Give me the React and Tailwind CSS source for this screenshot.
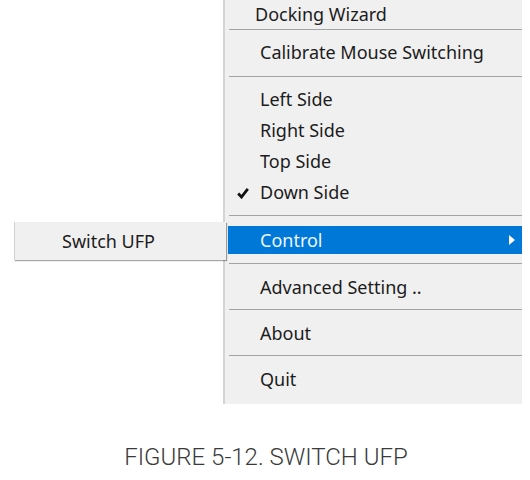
const font = { fontFamily: '"Noto Sans", "Open Sans", sans-serif' };

function Sep() {
  return <div className="ml-[4px] h-px bg-[#a4a4a4]" />;
}

function Item({ children, check }) {
  return (
    <div className="relative flex h-[31px] items-center pl-[35px] text-[18px] text-[#1c1c1c]">
      {check && (
        <svg className="absolute left-[12px] top-[10px]" width="12" height="12" viewBox="0 0 12 12">
          <polyline points="1.2,6.5 4.5,10 10.8,1.8" fill="none" stroke="#111" strokeWidth="2.8" />
        </svg>
      )}
      {children}
    </div>
  );
}

export default function App() {
  return (
    <div className="relative h-[480px] w-[530px] overflow-hidden bg-white" style={font}>
      <div className="ml-[223px] w-[299px] border-l-2 border-[#d4d4d4] bg-[#f0f0f0]">
        <div className="flex h-[29px] items-center pl-[30px] text-[18px] text-[#1c1c1c]">Docking Wizard</div>
        <Sep />
        <div className="pb-[8px] pt-[7px]">
          <Item>Calibrate Mouse Switching</Item>
        </div>
        <Sep />
        <div className="pb-[7px] pt-[7px]">
          <Item>Left Side</Item>
          <Item>Right Side</Item>
          <Item>Top Side</Item>
          <Item check>Down Side</Item>
        </div>
        <Sep />
        <div className="pb-[9px] pt-[10px]">
          <div className="ml-[3px] flex h-[28px] items-center justify-between bg-[#0078d7] pl-[32px] pr-[6px] text-[18px] text-[#eef6ff]">
            <span>Control</span>
            <svg width="8" height="12" viewBox="0 0 8 12">
              <polygon points="1,1 7,6 1,11" fill="#ffffff" />
            </svg>
          </div>
        </div>
        <Sep />
        <div className="pb-[6px] pt-[8px]">
          <Item>Advanced Setting ..</Item>
        </div>
        <Sep />
        <div className="pb-[6px] pt-[8px]">
          <Item>About</Item>
        </div>
        <Sep />
        <div className="pb-[9px] pt-[8px]">
          <Item>Quit</Item>
        </div>
      </div>

      <div className="absolute left-[14px] top-[222px] flex h-[38px] w-[212px] items-center border-l border-[#d0d0d0] bg-[#f0f0f0] pl-[47px] text-[18px] text-[#1c1c1c] shadow-[1px_1px_1px_rgba(0,0,0,0.35)]">
        Switch UFP
      </div>

      <div
        className="mt-[41px] pl-[2px] text-center text-[24px] leading-none font-light text-[#3a3a3a]"
        style={{ fontFamily: 'Roboto, "Liberation Sans", sans-serif' }}
      >
        FIGURE 5-12. SWITCH UFP
      </div>
    </div>
  );
}
